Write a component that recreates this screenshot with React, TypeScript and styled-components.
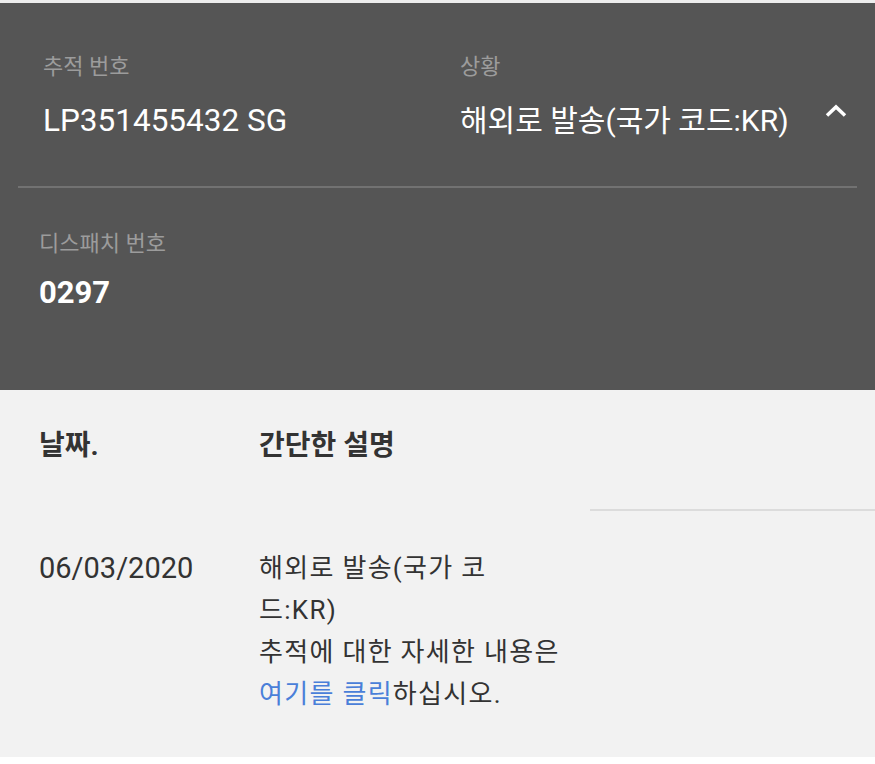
import React from "react";
import styled, { createGlobalStyle } from "styled-components";

const GlobalStyle = createGlobalStyle`
    body {
        margin: 0;
        background: #ffffff;
        font-family: Roboto, "Noto Sans CJK KR", sans-serif;
    }
`;

const Page = styled.div`
    width: 875px;
`;

const Panel = styled.section`
    background: #555555;
    border-top: 3px solid #ededed;
    padding: 0 18px;
    height: 390px;
    box-sizing: border-box;
`;

const SummaryRow = styled.div`
    display: grid;
    grid-template-columns: 417px 1fr auto;
    padding: 49px 11px 45px 25px;
`;

const Field = styled.div<{ $gap?: number }>`
    display: flex;
    flex-direction: column;
    gap: ${(p) => p.$gap ?? 19}px;
`;

const Label = styled.div`
    font-size: 22px;
    line-height: 30px;
    color: #9c9c9c;
`;

const Value = styled.div<{ $bold?: boolean; $size?: number }>`
    font-size: ${(p) => p.$size ?? 30}px;
    line-height: 40px;
    color: #ffffff;
    font-weight: ${(p) => (p.$bold ? 700 : 400)};
`;

const Toggle = styled.button`
    align-self: start;
    margin-top: 52px;
    margin-right: -1px;
    width: 22px;
    height: 13px;
    padding: 0;
    border: none;
    background: none;
    cursor: pointer;
    display: flex;
`;

const Divider = styled.hr`
    margin: 0;
    border: none;
    border-top: 2px solid #727272;
`;

const DispatchRow = styled.div`
    padding: 41px 21px 0;
`;

const History = styled.section`
    background: #f2f2f2;
    display: grid;
    grid-template-columns: 220px 331px 1fr;
    align-content: start;
    padding: 0 0 0 39px;
    height: 367px;
    box-sizing: border-box;
`;

const HeadCell = styled.div<{ $rule?: boolean }>`
    padding-top: 38px;
    height: 121px;
    box-sizing: border-box;
    font-size: 28px;
    line-height: 36px;
    font-weight: 700;
    color: #333333;
    border-bottom: 2px solid ${(p) => (p.$rule ? "#dcdcdc" : "transparent")};
`;

const DateCell = styled.div`
    padding-top: 36px;
    font-size: 29px;
    line-height: 42px;
    color: #333333;
`;

const DescCell = styled.div`
    padding-top: 36px;
    width: 305.5px;
    font-size: 26px;
    letter-spacing: 1.3px;
    line-height: 42px;
    color: #333333;
`;

const Link = styled.a`
    color: #4a7fd9;
    text-decoration: none;
`;

const ChevronUp = () => (
    <svg width="22" height="13" viewBox="0 0 22 13">
        <polyline points="2,11.5 11,3 20,11.5" fill="none" stroke="#ffffff" strokeWidth="3.5" strokeLinejoin="miter" />
    </svg>
);

const App = () => {
    return (
        <Page>
            <GlobalStyle />
            <Panel>
                <SummaryRow>
                    <Field>
                        <Label>추적 번호</Label>
                        <Value $size={31.5}>LP351455432 SG</Value>
                    </Field>
                    <Field>
                        <Label>상황</Label>
                        <Value>해외로 발송(국가 코드:KR)</Value>
                    </Field>
                    <Toggle aria-label="접기">
                        <ChevronUp />
                    </Toggle>
                </SummaryRow>
                <Divider />
                <DispatchRow>
                    <Field $gap={14}>
                        <Label>디스패치 번호</Label>
                        <Value $bold $size={31}>0297</Value>
                    </Field>
                </DispatchRow>
            </Panel>
            <History>
                <HeadCell>날짜.</HeadCell>
                <HeadCell>간단한 설명</HeadCell>
                <HeadCell $rule />
                <DateCell>06/03/2020</DateCell>
                <DescCell>
                    해외로 발송(국가 코드:KR)
                    <br />
                    추적에 대한 자세한 내용은 <Link href="#">여기를 클릭</Link>하십시오.
                </DescCell>
                <div />
            </History>
        </Page>
    );
};

export default App;
